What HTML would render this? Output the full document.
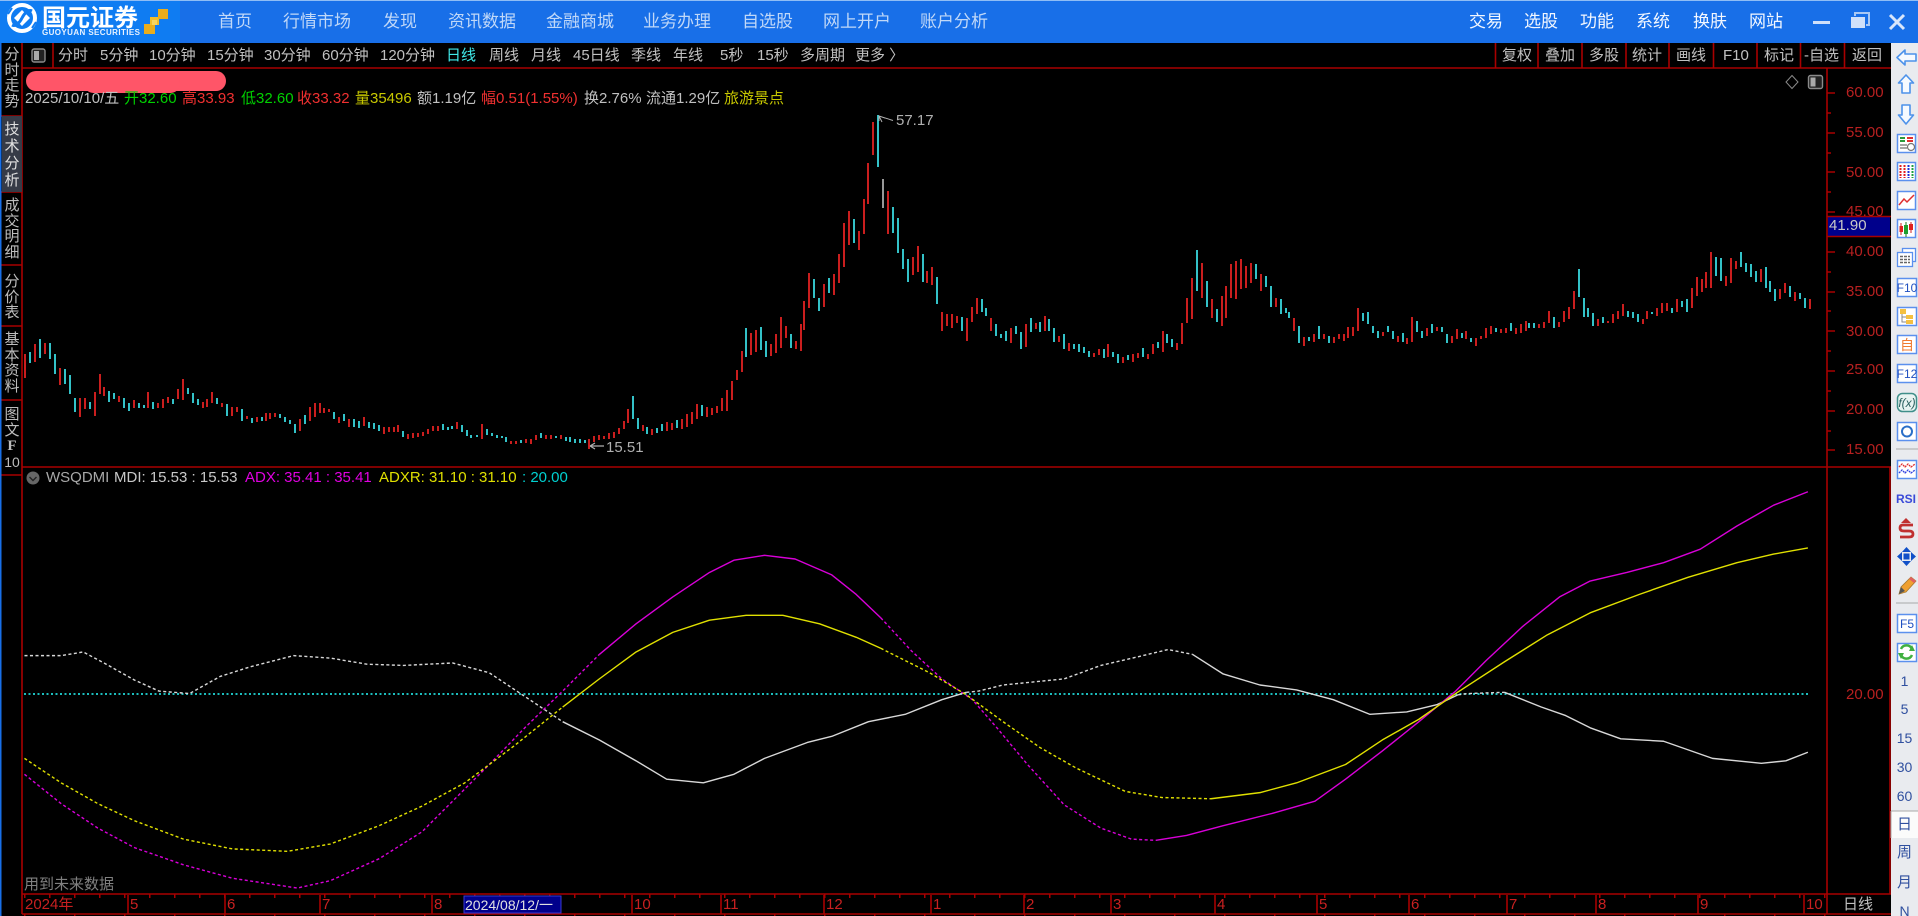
<!DOCTYPE html>
<html lang="zh-CN">
<head>
<meta charset="utf-8">
<title>国元证券</title>
<style>
html,body{margin:0;padding:0;background:#000;width:1918px;height:916px;overflow:hidden}
body{position:relative;font-family:"Liberation Sans","Noto Sans CJK SC",sans-serif;color:#c0c0c0}
.t{position:absolute;white-space:nowrap;font-size:15px;line-height:18px}
.n{position:absolute;white-space:nowrap;font-size:17px;line-height:20px;top:12px;color:#c0d8f8}
.r{position:absolute;white-space:nowrap;font-size:17px;line-height:20px;top:12px;color:#f2f7ff}
.v{position:absolute;left:2px;width:20px;text-align:center;font-size:15px;color:#bdbdbd;line-height:15.5px}
.a{position:absolute;left:1846px;font-size:15px;line-height:18px;color:#b82020;white-space:nowrap}
.d{position:absolute;top:896px;font-size:15px;line-height:18px;color:#c82020;white-space:nowrap}
.s{position:absolute;left:1891px;width:27px;text-align:center;font-size:14px;line-height:18px;color:#2f4f9f}
svg{position:absolute;left:0;top:0}
</style>
</head>
<body>
<!-- top bar -->
<div style="position:absolute;left:0;top:0;width:1918px;height:43px;background:#186fe8"></div>
<div style="position:absolute;left:0;top:1px;width:180px;height:42px;background:#0f7cf2"></div>
<div style="position:absolute;left:0;top:0;width:1918px;height:1px;background:#8fbdf5"></div>

<svg width="1918" height="916" viewBox="0 0 1918 916">
 <!-- logo -->
 <circle cx="22" cy="18" r="13" fill="#0f7cf2" stroke="#fff" stroke-width="4"/>
 <path d="M22 10 L30 18 L22 26 L14 18Z" fill="#fff"/>
 <path d="M12 25 C16 27 20 22 22 18 C24 14 28 9 32 11" fill="none" stroke="#0f7cf2" stroke-width="3"/>
 <path d="M8 14 L12 8M36 22 L32 28" stroke="#0f7cf2" stroke-width="2"/>
 <rect x="144" y="24" width="11" height="10" fill="#e9ad1d"/>
 <rect x="150" y="17" width="9" height="8" fill="#f2bd2a"/>
 <rect x="158" y="9" width="10" height="10" fill="#e9ad1d"/>
 <rect x="152" y="20" width="5" height="5" fill="#f7d560"/>

 <!-- window controls -->
 <rect x="1813" y="21" width="17" height="3" fill="#cfe0fa"/>
 <rect x="1851" y="17" width="14" height="11" fill="#cfe0fa"/>
 <path d="M1855 16V13H1869V25H1866" fill="none" stroke="#a8c8f5" stroke-width="2"/>
 <path d="M1890 15L1904 29M1904 15L1890 29" stroke="#d8e6fb" stroke-width="3"/>

 <!-- frame lines -->
 <g stroke="#a80000" stroke-width="1.6" fill="none">
  <path d="M22 43V914M22 68H1891M22 467H1891M22 894H1891M22 914H1891M1827 68V914M1890 467V894"/>
  <path d="M1 116H22M1 192H22M1 265H22M1 326H22M1 400H22M1 475H22"/>
  <path d="M53 43V68M1495.5 43V68M1538 43V68M1582 43V68M1626 43V68M1669 43V68M1713.5 43V68M1757 43V68M1800.5 43V68M1844.5 43V68"/>
  <path d="M1827 93H1835M1827 133H1835M1827 172H1835M1827 212H1835M1827 252H1835M1827 292H1835M1827 331H1835M1827 371H1835M1827 411H1835M1827 450H1835"/>
  <path d="M1827 113H1831M1827 153H1831M1827 192H1831M1827 272H1831M1827 311H1831M1827 351H1831M1827 391H1831M1827 431H1831"/>
  <path d="M128 895V914M225 895V914M320 895V914M432 895V914M632 895V914M721 895V914M824 895V914M931 895V914M1024 895V914M1111 895V914M1215 895V914M1317 895V914M1409 895V914M1507 895V914M1596 895V914M1698 895V914M1804 895V914"/>
  <path d="M24 896H1827" stroke-dasharray="1.5 23.5" stroke-width="4"/>
  <path d="M24 915H1827" stroke-dasharray="1.5 48.5" stroke-width="3"/>
 </g>
 <rect x="0" y="43" width="1.5" height="873" fill="#186fe8"/>

 <!-- toolbar icon -->
 <rect x="32" y="49" width="13" height="13" rx="2" fill="#222" stroke="#8a8a8a" stroke-width="1.4"/>
 <rect x="34" y="51" width="5" height="9" fill="#aaa"/>
 <!-- diamond + square -->
 <path d="M1792 75.5L1798 82L1792 88.5L1786 82Z" fill="none" stroke="#8a8a8a" stroke-width="1"/>
 <rect x="1808.5" y="75.5" width="14" height="13" rx="2" fill="#222" stroke="#8a8a8a" stroke-width="1.4"/>
 <rect x="1810.5" y="77.5" width="5" height="9" fill="#aaa"/>

 <!-- redaction blob -->
 <rect x="26" y="71" width="200" height="20" rx="10" fill="#ff5568"/>
 <rect x="84" y="74" width="96" height="19" rx="9.5" fill="#ff5568"/>

 <!-- candles -->
 <path fill="none" stroke="#d42020" stroke-width="1.9" d="M25 354V378M35 344V362M45 343V354M60 368V385M80 398V417M85 398V409M95 392V416M100 374V394M104 387V396M119 396V402M134 400V408M148 392V408M158 403V408M163 399V408M168 397V403M178 389V399M183 379V400M203 402V408M207 399V407M212 392V403M222 403V407M232 407V416M237 407V412M247 416V419M257 417V422M266 413V421M270 413V419M275 413V417M300 419V431M310 407V421M315 403V417M320 403V413M324 408V413M329 409V412M339 417V423M349 419V427M364 417V426M384 427V434M389 427V432M394 427V432M398 425V432M408 434V439M413 433V438M418 433V437M423 432V436M428 429V434M433 426V431M438 426V431M457 422V429M482 424V439M511 441V444M516 441V444M526 439V443M531 439V444M536 435V440M546 435V439M551 435V439M561 435V439M589 439V449M594 436V442M599 435V440M604 436V439M609 433V439M614 432V438M619 428V434M624 421V429M628 409V423M643 425V431M652 429V435M667 422V431M672 423V430M682 419V429M687 414V427M692 412V424M697 404V419M707 407V417M712 408V415M717 406V413M722 398V411M727 390V411M732 381V400M737 370V380M742 351V372M751 333V355M756 330V352M771 344V356M776 334V353M781 317V348M786 326V338M796 341V349M801 324V351M804 301V330M809 273V308M824 284V307M834 274V295M839 254V283M844 223V267M849 211V245M859 231V250M864 199V234M868 163V204M873 122V155M888 191V234M913 257V275M918 246V272M927 271V283M932 267V285M942 312V331M947 314V326M952 314V328M957 316V323M967 318V341M972 307V322M977 298V314M991 318V331M1011 328V343M1026 324V347M1036 323V329M1045 316V331M1059 336V342M1069 343V351M1094 353V357M1099 349V355M1108 344V357M1123 357V363M1133 354V362M1138 353V358M1148 354V359M1153 344V354M1163 331V352M1177 343V350M1182 323V344M1187 298V323M1192 278V319M1202 263V298M1212 299V318M1222 296V326M1226 286V318M1231 264V298M1236 261V299M1241 259V289M1246 266V288M1251 263V283M1261 274V291M1276 298V307M1294 318V331M1304 337V346M1314 334V342M1324 334V339M1334 337V343M1339 334V339M1344 334V341M1348 327V338M1353 327V336M1358 308V331M1383 332V336M1398 336V342M1407 338V344M1412 317V342M1427 328V336M1437 327V331M1452 336V343M1457 329V339M1466 331V339M1476 338V346M1481 336V339M1486 328V338M1491 326V334M1501 329V333M1506 328V333M1516 328V334M1521 324V333M1526 321V331M1539 324V328M1544 322V328M1549 311V323M1559 322V327M1564 311V322M1569 307V319M1574 291V309M1598 319V326M1608 321V323M1613 314V323M1618 311V319M1623 304V316M1643 319V324M1647 311V319M1657 308V316M1662 303V313M1667 303V311M1677 299V312M1692 288V308M1697 277V296M1702 279V292M1706 272V288M1711 252V288M1726 276V286M1731 258V283M1736 261V269M1761 269V282M1780 289V299M1785 283V293M1795 292V301M1810 299V309"/>
 <path fill="none" stroke="#36ccd2" stroke-width="1.9" d="M30 352V363M40 339V358M50 343V359M55 354V374M65 369V384M70 375V394M75 398V412M90 402V409M109 391V402M114 393V399M124 398V408M129 403V411M139 403V408M144 405V408M153 402V409M173 399V404M188 388V394M193 393V403M198 399V405M217 398V404M227 404V416M242 409V421M252 418V423M262 417V421M280 414V418M285 417V422M290 420V424M295 424V433M305 415V424M334 412V419M344 414V421M354 419V427M359 421V428M369 422V428M374 423V429M379 425V431M403 431V437M443 424V430M448 427V430M452 426V429M462 425V432M467 430V436M471 435V438M477 435V437M487 429V435M492 433V436M497 435V438M502 436V438M506 437V442M521 440V443M541 433V438M556 436V438M566 437V441M570 437V442M575 439V443M580 439V443M585 440V443M633 396V419M638 418V429M647 427V434M657 428V433M662 424V431M677 420V428M702 405V416M746 328V357M761 327V350M766 341V357M791 334V348M814 279V298M819 298V311M829 278V293M854 219V243M878 115V167M893 207V233M898 218V253M903 249V269M908 259V282M923 254V282M937 277V304M962 317V331M982 299V312M986 308V316M996 324V336M1001 334V338M1006 331V341M1016 326V334M1021 332V349M1031 318V332M1040 322V332M1049 319V331M1054 328V342M1064 334V349M1074 344V349M1079 344V352M1084 347V353M1089 351V357M1104 349V358M1113 352V357M1118 354V363M1128 355V360M1143 348V357M1158 342V348M1167 334V343M1172 339V347M1197 250V291M1207 281V307M1217 309V322M1256 264V279M1266 276V287M1271 286V307M1281 299V314M1286 308V313M1289 312V318M1299 326V343M1309 337V341M1319 326V339M1329 336V343M1363 313V321M1368 312V324M1373 326V333M1378 331V338M1388 326V332M1393 331V339M1403 333V342M1417 321V332M1422 331V338M1432 324V333M1442 327V332M1447 334V343M1462 333V338M1471 338V342M1496 328V332M1511 323V331M1529 323V328M1534 323V328M1554 317V328M1579 269V297M1584 298V317M1588 308V317M1593 313V326M1603 317V323M1628 311V317M1633 312V318M1638 314V322M1652 312V314M1672 308V313M1682 301V307M1687 299V312M1716 257V276M1721 258V281M1741 252V267M1746 263V272M1751 264V277M1756 271V282M1766 267V288M1770 281V292M1775 289V301M1790 286V297M1800 293V299M1805 298V308"/>
 <path d="M883 179V208" stroke="#a0a0a0" stroke-width="1.9"/>

 <!-- annotation arrows -->
 <path d="M879 121V116L893 120.5M879 116L885 118M879 116L882 122" fill="none" stroke="#b0b0b0" stroke-width="1"/>
 <path d="M590 446H604M590 446L595 443M590 446L595 449" fill="none" stroke="#b0b0b0" stroke-width="1.2"/>

 <!-- indicator lines -->
 <line x1="24" y1="694" x2="1810" y2="694" stroke="#20d8d8" stroke-width="1.8" stroke-dasharray="2 2.5"/>
 <g transform="scale(1.2232)" fill="none" stroke-width="1.15" stroke-linejoin="round">
  <!-- white -->
  <polyline stroke="#d8d8d8" stroke-dasharray="2.5 2" points="20,536 50,536 68,533 85,542 110,556 130,565 155,567 180,553 205,545 240,536 270,538 300,543 330,544 370,542 400,550 430,570 460,590"/>
  <polyline stroke="#d8d8d8" points="460,590 490,605 520,622 545,637 575,640 600,633 625,620 660,607 680,602 710,590 740,584 770,572 790,566"/>
  <polyline stroke="#d8d8d8" stroke-dasharray="2.5 2" points="790,566 800,565 820,560 870,555 900,544 930,537 955,531 975,535"/>
  <polyline stroke="#d8d8d8" points="975,535 1000,551 1030,560 1060,564 1090,572 1120,584 1150,582 1175,576 1192,568"/>
  <polyline stroke="#d8d8d8" stroke-dasharray="2.5 2" points="1192,568 1200,567 1230,566"/>
  <polyline stroke="#d8d8d8" points="1230,566 1260,578 1280,585 1300,595 1325,604 1360,606 1400,620 1440,624 1460,622 1478,615"/>
  <!-- magenta -->
  <polyline stroke="#d800d8" stroke-dasharray="2.5 2" points="20,633 50,657 80,677 110,693 150,707 190,718 243,726 270,720 310,702 345,680 375,650 400,625 430,594 460,565 490,535"/>
  <polyline stroke="#d800d8" points="490,535 520,510 550,488 580,468 600,458 625,454 650,457 680,470 700,486 720,505"/>
  <polyline stroke="#d800d8" stroke-dasharray="2.5 2" points="720,505 745,532 770,555 795,572 815,595 840,625 870,658 900,677 925,686 945,687"/>
  <polyline stroke="#d800d8" points="945,687 970,683 1000,675 1040,665 1075,655 1100,637 1130,614 1160,590 1190,565 1215,540 1245,512 1275,488 1300,475 1330,468 1360,460 1390,449 1420,430 1450,413 1478,402"/>
  <!-- yellow -->
  <polyline stroke="#e0e000" stroke-dasharray="2.5 2" points="20,620 50,640 80,657 110,671 150,686 190,694 235,696 270,690 310,675 345,659 380,640 420,610 460,578"/>
  <polyline stroke="#e0e000" points="460,578 490,555 520,533 550,517 580,507 610,503 640,503 670,510 700,521 720,530"/>
  <polyline stroke="#e0e000" stroke-dasharray="2.5 2" points="720,530 730,535 760,550 790,568 820,590 850,611 880,628 920,647 950,652 990,653"/>
  <polyline stroke="#e0e000" points="990,653 1030,648 1060,640 1100,625 1130,605 1160,588 1190,567 1230,541 1265,519 1300,501 1340,486 1380,472 1420,460 1450,453 1478,448"/>
 </g>

 <!-- indicator header icon -->
 <circle cx="33" cy="478" r="6.5" fill="#666"/>
 <path d="M29.5 477L33 480.5L36.5 477" fill="none" stroke="#222" stroke-width="1.4"/>

 <!-- 41.90 box -->
 <rect x="1828" y="217" width="62" height="19" fill="#00008b"/>
 <path d="M1827 216.5H1891M1827 236.5H1891" stroke="#a80000" stroke-width="1.6"/>
 <!-- date cursor -->
 <rect x="464" y="896" width="97" height="17" fill="#00008b" stroke="#3a3ad0" stroke-width="1"/>

 <!-- side panel -->
 <rect x="1891" y="43" width="27" height="873" fill="#e9ebef"/>
 <rect x="1891" y="811" width="27" height="27" fill="#fbfbfb"/>
 <path d="M1891 811H1918M1891 811V838" stroke="#aaa" stroke-width="1" fill="none"/>
 <path d="M1896 449H1918M1896 603H1918" stroke="#a8a8a8" stroke-width="1"/>
 <g fill="#f6faff" stroke="#4d92ea" stroke-width="1.6" stroke-linejoin="round">
  <path d="M1897 57.5L1905 50V54H1916V61H1905V65Z"/>
  <path d="M1906 75L1913.5 83H1910V93H1902V83H1898.5Z"/>
  <path d="M1902 105H1910V115H1913.5L1906 124L1898.5 115H1902Z"/>
 </g>
 <g fill="#fff" stroke="#5b90ee" stroke-width="1.5">
  <rect x="1897.5" y="134.5" width="18" height="18"/>
  <rect x="1897.5" y="162.5" width="18" height="18"/>
  <rect x="1897.5" y="191.5" width="18" height="18"/>
  <rect x="1897.5" y="219.5" width="18" height="18"/>
  <rect x="1897.5" y="278.5" width="19" height="18"/>
  <rect x="1897.5" y="307.5" width="19" height="18"/>
  <rect x="1897.5" y="335.5" width="19" height="18"/>
  <rect x="1897.5" y="364.5" width="19" height="18"/>
  <rect x="1897.5" y="422.5" width="19" height="18"/>
  <rect x="1897.5" y="460.5" width="19" height="18"/>
  <rect x="1897.5" y="614.5" width="19" height="18"/>
  <rect x="1897.5" y="643.5" width="19" height="18"/>
 </g>
 <!-- ic1 -->
 <path d="M1900 138H1905M1900 141H1905" stroke="#2a9a3a" stroke-width="2"/>
 <path d="M1907 138H1913M1907 141H1913" stroke="#e03030" stroke-width="2"/>
 <path d="M1900 145H1907M1900 148H1907" stroke="#888" stroke-width="1.5"/>
 <circle cx="1911" cy="147" r="3.5" fill="none" stroke="#777" stroke-width="1.2"/>
 <!-- ic2 -->
 <path d="M1900.5 165V178M1904.5 165V178" stroke="#e02020" stroke-width="2" stroke-dasharray="2 1"/>
 <path d="M1908.5 165V178" stroke="#2030d8" stroke-width="2" stroke-dasharray="2 1"/>
 <path d="M1912.5 165V178" stroke="#20a040" stroke-width="2" stroke-dasharray="2 1"/>
 <!-- ic3 -->
 <path d="M1899 205L1904 199L1907 202L1914 195" fill="none" stroke="#e03030" stroke-width="1.5"/>
 <!-- ic4 -->
 <path d="M1901 223V235M1911 222V233" stroke="#d02020" stroke-width="1"/><path d="M1906 222V237" stroke="#187a20" stroke-width="1"/>
 <rect x="1899.5" y="226" width="3.5" height="6" fill="#e02020"/><rect x="1904" y="225" width="4" height="9" fill="#1fa030"/><rect x="1909" y="224" width="4" height="6" fill="#e02020"/>
 <!-- ic5 -->
 <rect x="1902.5" y="248.5" width="13" height="13" fill="#fff" stroke="#5b90ee" stroke-width="1.3"/>
 <rect x="1897.5" y="252.5" width="15" height="14" fill="#fff" stroke="#5b90ee" stroke-width="1.3"/>
 <path d="M1900 256.5H1910M1900 259.5H1910M1900 262.5H1910" stroke="#666" stroke-width="1.5" stroke-dasharray="3 1"/>
 <!-- tree -->
 <rect x="1900" y="309" width="6" height="5" fill="#f4c040"/><rect x="1906" y="315" width="7" height="4" fill="#f4c040"/><rect x="1906" y="320" width="7" height="4" fill="#f4c040"/>
 <path d="M1902 314V322H1906M1902 317H1906" fill="none" stroke="#888" stroke-width="1"/>
 <!-- f(x) -->
 <rect x="1897.5" y="393.5" width="19" height="18" rx="5" fill="#e8f4f2" stroke="#3f8f8a" stroke-width="1.5"/>
 <!-- circle -->
 <circle cx="1907" cy="431.5" r="5" fill="none" stroke="#2a6fc8" stroke-width="2"/>
 <!-- wave -->
 <path d="M1899 467L1902 464L1905 467L1908 464L1911 467L1915 464" fill="none" stroke="#e03030" stroke-width="1.3" stroke-dasharray="2 .8"/>
 <path d="M1899 473L1902 470L1905 473L1908 470L1911 473L1915 470" fill="none" stroke="#3040e0" stroke-width="1.3" stroke-dasharray="2 .8"/>
 <!-- $ -->
 <path d="M1906 518L1911 523H1901Z" fill="#c03030"/>
 <path d="M1913 525H1903Q1900 525 1900 528Q1900 531 1904 531H1909Q1913 531 1913 534Q1913 537 1909 537H1900" fill="none" stroke="#c03030" stroke-width="2.8"/>
 <!-- move -->
 <g fill="#1050c8">
  <path d="M1906.5 547L1911 552H1902Z"/><path d="M1906.5 566L1911 561H1902Z"/>
  <path d="M1897 556.5L1902 552V561Z"/><path d="M1916 556.5L1911 552V561Z"/>
  <rect x="1903.5" y="553.5" width="6" height="6"/>
 </g>
 <!-- pencil -->
 <path d="M1899 594L1901 587L1911 577L1916 581L1906 592Z" fill="#f0a030" stroke="#a87a30" stroke-width=".8"/>
 <path d="M1899 594L1901 587L1905 591Z" fill="#555"/>
 <path d="M1911 577L1916 581L1914 583L1909 579Z" fill="#e06060"/>
 <!-- refresh -->
 <path d="M1901 649A6 6 0 0 1 1912 649M1912 655A6 6 0 0 1 1901 655" fill="none" stroke="#40b040" stroke-width="2.5"/>
 <path d="M1912 645L1915 651H1909Z M1901 659L1898 653H1904Z" fill="#40b040"/>

 <!-- side icon texts -->
 <g font-family="'Liberation Sans','Noto Sans CJK SC',sans-serif" text-anchor="middle">
  <text x="1907" y="292" font-size="12" fill="#2050c0">F10</text>
  <text x="1907" y="350" font-size="14" fill="#f07a30">自</text>
  <text x="1907" y="378" font-size="12" fill="#2050c0">F12</text>
  <text x="1907" y="407" font-size="12" font-style="italic" fill="#2a6060">f(x)</text>
  <text x="1906" y="503" font-size="12" font-weight="bold" fill="#3a4ad8">RSI</text>
  <text x="1907" y="628" font-size="12" fill="#2050c0">F5</text>
 </g>
</svg>

<!-- nav text -->
<div style="position:absolute;left:42px;top:6px;font-size:24px;line-height:26px;font-weight:bold;color:#fff;white-space:nowrap">国元证券</div>
<div style="position:absolute;left:42px;top:28px;font-size:8px;line-height:9px;font-weight:bold;color:#e8f2ff;white-space:nowrap;letter-spacing:.4px">GUOYUAN SECURITIES</div>
<div class="n" style="left:218px">首页</div>
<div class="n" style="left:283px">行情市场</div>
<div class="n" style="left:383px">发现</div>
<div class="n" style="left:448px">资讯数据</div>
<div class="n" style="left:546px">金融商城</div>
<div class="n" style="left:643px">业务办理</div>
<div class="n" style="left:742px">自选股</div>
<div class="n" style="left:823px">网上开户</div>
<div class="n" style="left:920px">账户分析</div>
<div class="r" style="left:1469px">交易</div>
<div class="r" style="left:1524px">选股</div>
<div class="r" style="left:1580px">功能</div>
<div class="r" style="left:1636px">系统</div>
<div class="r" style="left:1693px">换肤</div>
<div class="r" style="left:1749px">网站</div>

<!-- toolbar -->
<div class="t" style="left:58px;top:47px">分时</div>
<div class="t" style="left:100px;top:47px">5分钟</div>
<div class="t" style="left:149px;top:47px">10分钟</div>
<div class="t" style="left:207px;top:47px">15分钟</div>
<div class="t" style="left:264px;top:47px">30分钟</div>
<div class="t" style="left:322px;top:47px">60分钟</div>
<div class="t" style="left:380px;top:47px">120分钟</div>
<div class="t" style="left:446px;top:47px;color:#40e8e8">日线</div>
<div class="t" style="left:489px;top:47px">周线</div>
<div class="t" style="left:531px;top:47px">月线</div>
<div class="t" style="left:573px;top:47px">45日线</div>
<div class="t" style="left:631px;top:47px">季线</div>
<div class="t" style="left:673px;top:47px">年线</div>
<div class="t" style="left:720px;top:47px">5秒</div>
<div class="t" style="left:757px;top:47px">15秒</div>
<div class="t" style="left:800px;top:47px">多周期</div>
<div class="t" style="left:855px;top:47px">更多 〉</div>
<div class="t" style="left:1502px;top:47px">复权</div>
<div class="t" style="left:1545px;top:47px">叠加</div>
<div class="t" style="left:1589px;top:47px">多股</div>
<div class="t" style="left:1632px;top:47px">统计</div>
<div class="t" style="left:1676px;top:47px">画线</div>
<div class="t" style="left:1723px;top:47px">F10</div>
<div class="t" style="left:1764px;top:47px">标记</div>
<div class="t" style="left:1804px;top:47px">-自选</div>
<div class="t" style="left:1852px;top:47px">返回</div>

<!-- left column -->
<div style="position:absolute;left:1.5px;top:116px;width:20px;height:76px;background:#363b47"></div>
<div class="v" style="top:47px">分<br>时<br>走<br>势</div>
<div class="v" style="top:121px;line-height:17px;color:#e0e0e0">技<br>术<br>分<br>析</div>
<div class="v" style="top:198px">成<br>交<br>明<br>细</div>
<div class="v" style="top:274px">分<br>价<br>表</div>
<div class="v" style="top:332px">基<br>本<br>资<br>料</div>
<div class="v" style="top:407px">图<br>文<br><span style="font-family:'Liberation Serif',serif;font-weight:bold">F</span><br><span style="font-size:14px">10</span></div>

<!-- info line -->
<div class="t" style="left:25px;top:90px;color:#c0c0c0">2025/10/10/五</div>
<div class="t" style="left:124px;top:90px;color:#00d000">开32.60</div>
<div class="t" style="left:182px;top:90px;color:#f03030">高33.93</div>
<div class="t" style="left:241px;top:90px;color:#00d000">低32.60</div>
<div class="t" style="left:297px;top:90px;color:#f03030">收33.32</div>
<div class="t" style="left:355px;top:90px;color:#c8c800">量35496</div>
<div class="t" style="left:417px;top:90px">额1.19亿</div>
<div class="t" style="left:481px;top:90px;color:#f03030">幅0.51(1.55%)</div>
<div class="t" style="left:584px;top:90px">换2.76%</div>
<div class="t" style="left:646px;top:90px">流通1.29亿</div>
<div class="t" style="left:724px;top:90px;color:#c8c800">旅游景点</div>

<div class="t" style="left:896px;top:112px;color:#b0b0b0">57.17</div>
<div class="t" style="left:606px;top:439px;color:#b0b0b0">15.51</div>

<!-- axis -->
<div class="a" style="top:84px">60.00</div>
<div class="a" style="top:124px">55.00</div>
<div class="a" style="top:164px">50.00</div>
<div class="a" style="top:203px">45.00</div>
<div class="a" style="top:243px">40.00</div>
<div class="a" style="top:283px">35.00</div>
<div class="a" style="top:323px">30.00</div>
<div class="a" style="top:361px">25.00</div>
<div class="a" style="top:401px">20.00</div>
<div class="a" style="top:441px">15.00</div>
<div class="a" style="top:686px">20.00</div>
<div class="t" style="left:1829px;top:217px;color:#c8c8c8">41.90</div>

<!-- indicator header -->
<div class="t" style="left:46px;top:469px;color:#a8a8a8">WSQDMI</div>
<div class="t" style="left:114px;top:469px;color:#c8c8c8">MDI: 15.53 : 15.53</div>
<div class="t" style="left:245px;top:469px;color:#e000e0">ADX: 35.41 : 35.41</div>
<div class="t" style="left:379px;top:469px;color:#e0e000">ADXR: 31.10 : 31.10</div>
<div class="t" style="left:522px;top:469px;color:#00d0d0">: 20.00</div>
<div class="t" style="left:24px;top:876px;color:#808080">用到未来数据</div>

<!-- dates -->
<div class="d" style="left:25px">2024年</div>
<div class="d" style="left:130px">5</div>
<div class="d" style="left:227px">6</div>
<div class="d" style="left:322px">7</div>
<div class="d" style="left:434px">8</div>
<div class="d" style="left:465px;color:#e0e0e0;font-size:14px">2024/08/12/一</div>
<div class="d" style="left:634px">10</div>
<div class="d" style="left:723px">11</div>
<div class="d" style="left:826px">12</div>
<div class="d" style="left:933px">1</div>
<div class="d" style="left:1026px">2</div>
<div class="d" style="left:1113px">3</div>
<div class="d" style="left:1217px">4</div>
<div class="d" style="left:1319px">5</div>
<div class="d" style="left:1411px">6</div>
<div class="d" style="left:1509px">7</div>
<div class="d" style="left:1598px">8</div>
<div class="d" style="left:1700px">9</div>
<div class="d" style="left:1806px">10</div>
<div class="t" style="left:1843px;top:896px;color:#c0c0c0">日线</div>

<!-- side labels -->
<div class="s" style="top:672px">1</div>
<div class="s" style="top:700px">5</div>
<div class="s" style="top:729px">15</div>
<div class="s" style="top:758px">30</div>
<div class="s" style="top:787px">60</div>
<div class="s" style="top:816px;font-size:15px">日</div>
<div class="s" style="top:844px;font-size:15px">周</div>
<div class="s" style="top:874px;font-size:15px">月</div>
<div class="s" style="top:902px">N</div>
</body>
</html>
